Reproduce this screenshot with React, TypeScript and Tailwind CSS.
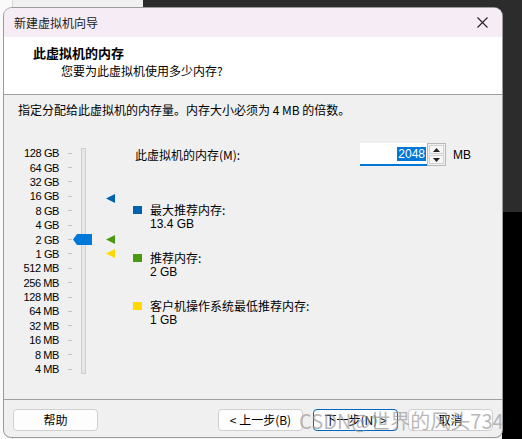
import React from "react";

const FONT = "'Liberation Sans','Noto Sans CJK SC',sans-serif";
const CJK = "'Noto Sans CJK SC','Liberation Sans',sans-serif";

const labels = [
  "128 GB", "64 GB", "32 GB", "16 GB", "8 GB", "4 GB", "2 GB", "1 GB",
  "512 MB", "256 MB", "128 MB", "64 MB", "32 MB", "16 MB", "8 MB", "4 MB",
];

function Marker({ color }: { color: string }) {
  return (
    <svg width="9" height="9" viewBox="0 0 9 9">
      <polygon points="0,4.5 9,0 9,9" fill={color} />
    </svg>
  );
}

function Legend({ color, title, value }: { color: string; title: string; value: string }) {
  return (
    <div className="flex items-start">
      <div className={`mt-[4px] w-[9px] h-[8px] ${color}`} />
      <div className="ml-[8px] flex flex-col text-[12px] leading-[15px] text-black">
        <span style={{ fontFamily: CJK }}>{title}</span>
        <span>{value}</span>
      </div>
    </div>
  );
}

function Btn({ children, primary }: { children: React.ReactNode; primary?: boolean }) {
  return (
    <div
      className={`w-[85px] h-[22px] rounded-[4px] bg-[#fdfdfd] flex items-center justify-center text-[12px] text-black border ${
        primary ? "border-[#0067c0]" : "border-[#cfcfcf]"
      }`}
    >
      {children}
    </div>
  );
}

export default function App() {
  return (
    <div
      className="relative w-[522px] h-[439px] overflow-hidden bg-[#f0f0f0]"
      style={{ fontFamily: FONT }}
    >
      {/* desktop background */}
      <div className="absolute left-0 top-0 w-[13px] h-full bg-[#fafafa] border-r border-[#d6d6d6]" />
      <div className="absolute left-[143px] top-0 right-0 h-[215px] bg-[#2c2c2c]" />
      <div className="absolute left-[502px] top-[212px] right-0 bottom-0 bg-black" />

      {/* dialog window */}
      <div className="absolute left-[4px] top-[8px] w-[498px] h-[429px] rounded-t-[8px] rounded-b-[7px] overflow-hidden ring-1 ring-[#9c9c9c] bg-[#f0f0f0] flex flex-col">
        {/* title bar */}
        <div className="h-[29px] shrink-0 bg-[#f6ecf6] flex items-center justify-between pl-[10px] pr-[14px]">
          <span className="text-[12px] text-[#1a1a1a]" style={{ fontFamily: CJK }}>
            新建虚拟机向导
          </span>
          <svg width="11" height="11" viewBox="0 0 11 11">
            <path d="M0.5 0.5 L10.5 10.5 M10.5 0.5 L0.5 10.5" stroke="#222" strokeWidth="1.1" />
          </svg>
        </div>

        {/* header */}
        <div className="h-[58px] shrink-0 bg-white border-b border-[#a0a0a0] pt-[8px]" style={{ fontFamily: CJK }}>
          <div className="pl-[29px] text-[13px] leading-[16px] font-bold text-black">此虚拟机的内存</div>
          <div className="pl-[57px] mt-[2px] text-[12px] leading-[16px] text-black">
            您要为此虚拟机使用多少内存?
          </div>
        </div>

        {/* body */}
        <div className="flex-1 flex flex-col pt-[7px]">
          <div className="pl-[14px] text-[12px] leading-[16px] text-black" style={{ fontFamily: CJK }}>
            指定分配给此虚拟机的内存量。内存大小必须为 4 MB 的倍数。
          </div>

          <div className="flex mt-[28px]">
            {/* slider */}
            <div className="relative w-[129px] shrink-0">
              <div className="flex flex-col">
                {labels.map((l) => (
                  <div key={l} className="h-[14.4px] flex items-center">
                    <span className="w-[55px] text-right text-[11px] leading-[14px] tracking-[-0.4px] text-black">
                      {l}
                    </span>
                    <span className="ml-[9px] w-[4px] h-px bg-[#c4c4c4]" />
                  </div>
                ))}
              </div>
              {/* track */}
              <div className="absolute left-[77px] top-[2px] bottom-[2px] w-[5px] bg-[#e6e6e6] border border-[#cfcfcf]" />
              {/* thumb */}
              <svg className="absolute left-[69px] top-[88px]" width="19" height="11" viewBox="0 0 19 11">
                <polygon points="4,0 19,0 19,11 4,11 0,5.5" fill="#0078d7" />
              </svg>
              <div className="absolute left-[102px] top-[48px]">
                <Marker color="#0063b1" />
              </div>
              <div className="absolute left-[102px] top-[89px]">
                <Marker color="#4a9a10" />
              </div>
              <div className="absolute left-[102px] top-[103px]">
                <Marker color="#ffd800" />
              </div>
            </div>

            {/* right content */}
            <div className="flex flex-col -mt-[3px]">
              <div className="flex items-center h-[23px]">
                <div className="w-[227px] pl-[2px] text-[12px] text-black" style={{ fontFamily: CJK }}>
                  此虚拟机的内存(M):
                </div>
                <div className="w-[67px] h-[23px] bg-white border-b-2 border-[#0078d7] flex items-center justify-end pr-[1px]">
                  <span className="bg-[#0078d7] text-white text-[12px] leading-[14px] px-[1px]">2048</span>
                </div>
                <div className="w-[19px] h-[23px] border border-[#b9b9b9] flex flex-col gap-px p-px bg-[#f0f0f0]">
                  <div className="flex-1 border border-[#d2d2d2] bg-[#f6f6f6] flex items-center justify-center">
                    <svg width="7" height="4" viewBox="0 0 7 4">
                      <polygon points="3.5,0 7,4 0,4" fill="#222" />
                    </svg>
                  </div>
                  <div className="flex-1 border border-[#d2d2d2] bg-[#f6f6f6] flex items-center justify-center">
                    <svg width="7" height="4" viewBox="0 0 7 4">
                      <polygon points="0,0 7,0 3.5,4" fill="#222" />
                    </svg>
                  </div>
                </div>
                <span className="ml-[7px] text-[12px] text-black">MB</span>
              </div>

              <div className="mt-[36px] flex flex-col gap-[18px]">
                <Legend color="bg-[#0063b1]" title="最大推荐内存:" value="13.4 GB" />
                <Legend color="bg-[#4a9a10]" title="推荐内存:" value="2 GB" />
                <Legend color="bg-[#ffd800]" title="客户机操作系统最低推荐内存:" value="1 GB" />
              </div>
            </div>
          </div>
        </div>

        {/* footer */}
        <div className="h-[38px] shrink-0 border-t border-[#a0a0a0] flex items-start pt-[9px] pl-[9px] pr-[9px]" style={{ fontFamily: CJK }}>
          <Btn>帮助</Btn>
          <div className="ml-auto flex gap-[10px]">
            <Btn>&lt; 上一步(B)</Btn>
            <Btn primary>下一步(N) &gt;</Btn>
            <Btn>取消</Btn>
          </div>
        </div>
      </div>

      {/* watermark */}
      <div
        className="absolute left-[299px] top-[408px] text-[20px] leading-[26px] text-[#9a9a9a]/70 whitespace-nowrap pointer-events-none"
        style={{ fontFamily: CJK }}
      >
        CSDN@世界的风头734
      </div>
    </div>
  );
}
